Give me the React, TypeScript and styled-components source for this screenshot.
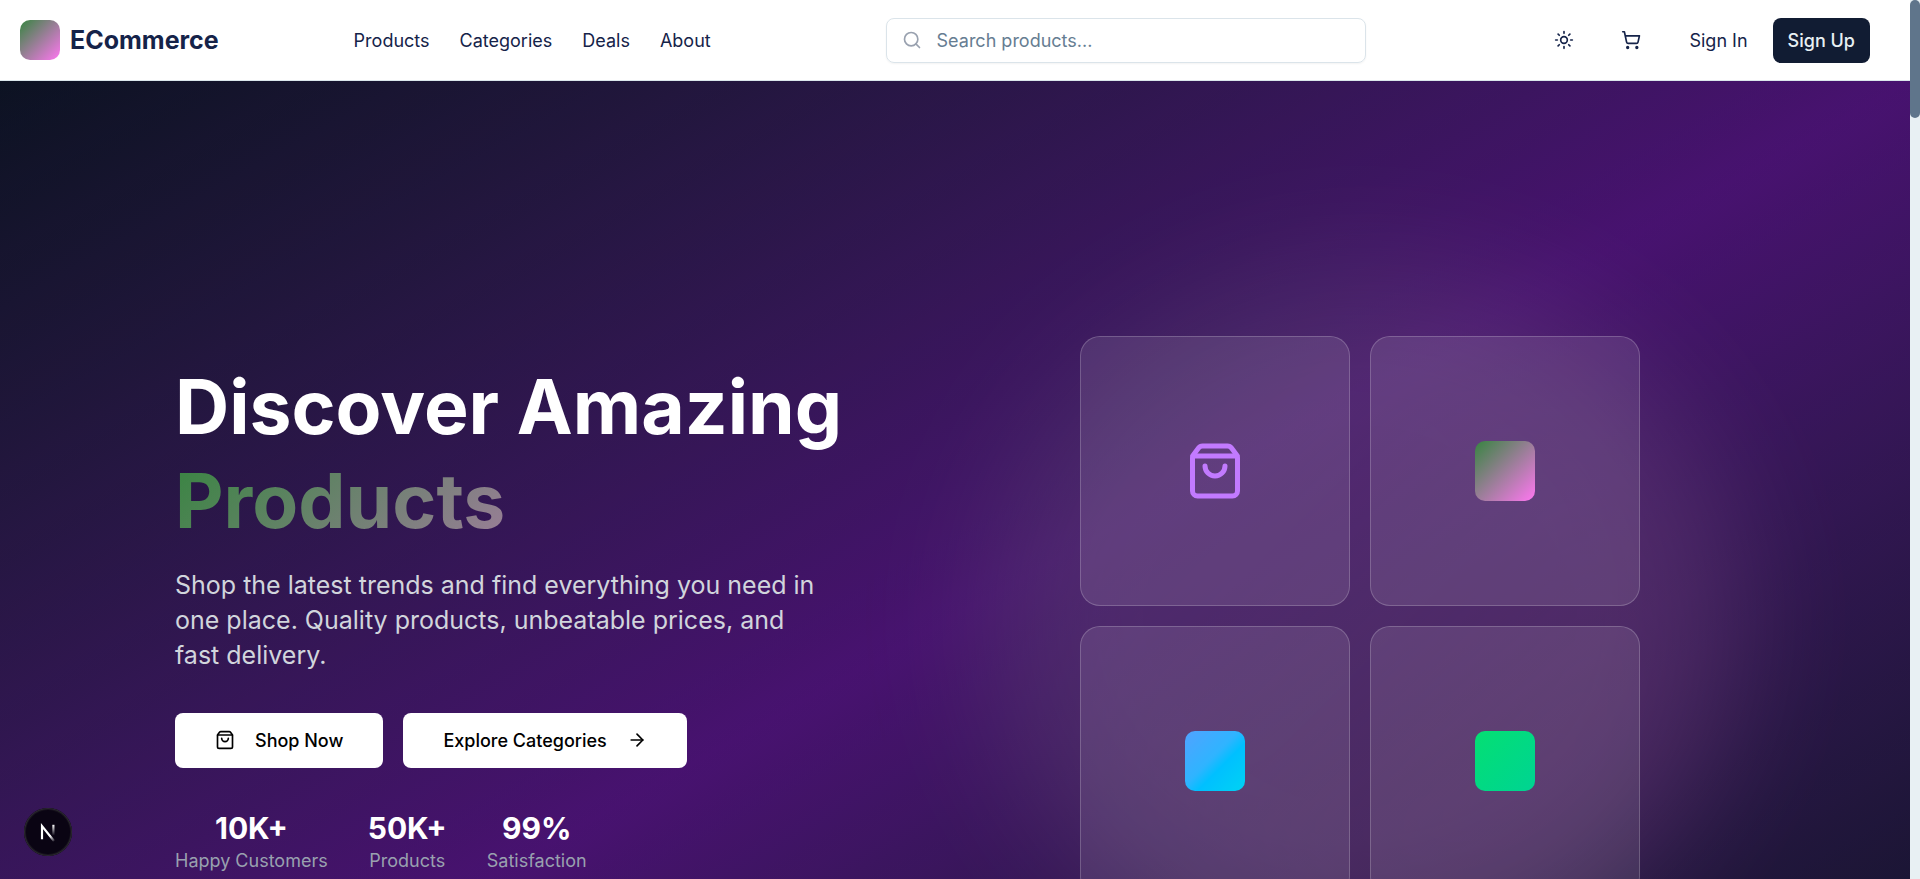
import React from 'react';
import styled, { createGlobalStyle } from 'styled-components';
import { ArrowRight, Search, ShoppingBag, ShoppingCart, Sun } from 'lucide-react';

const GlobalStyle = createGlobalStyle`
  *, *::before, *::after { box-sizing: border-box; }
  body { margin: 0; font-family: Inter, "Liberation Sans", sans-serif; color: #152349; background: #fff; }
  h1, p, dl, dd, dt { margin: 0; }
  a { color: inherit; text-decoration: none; }
  button, input { font: inherit; }
`;

const Shell = styled.div`
  display: flex;
  height: 100vh;
  overflow: hidden;
`;

const Page = styled.div`
  flex: 1;
  min-width: 0;
`;

const ScrollRail = styled.div`
  flex: 0 0 10px;
  background: #e8f0f3;
`;

const ScrollThumb = styled.div`
  height: 118px;
  border-radius: 5px;
  background: #5f758b;
`;

const Header = styled.header`
  display: flex;
  align-items: center;
  justify-content: space-between;
  height: 81px;
  padding: 0 40px 0 20px;
  border-bottom: 1px solid #dbe7ec;
  background: #fff;
`;

const Brand = styled.a`
  display: flex;
  align-items: center;
  gap: 10px;
  font-size: 25px;
  line-height: 35px;
  font-weight: 700;
`;

const GradientTile = styled.span<{ $size: number; $fill: string }>`
  width: ${p => p.$size}px;
  height: ${p => p.$size}px;
  border-radius: 10px;
  background: ${p => p.$fill};
`;

const Nav = styled.nav`
  display: flex;
  gap: 30px;
  font-size: 18px;
  line-height: 25px;
  font-weight: 400;
`;

const SearchBox = styled.label`
  display: flex;
  align-items: center;
  gap: 15px;
  width: 480px;
  height: 45px;
  margin: 0 40px;
  padding: 0 15px;
  border: 1px solid #dbe4ea;
  border-radius: 8px;
  box-shadow: 0 1px 2px rgba(0, 0, 0, 0.05);
  color: #99a1af;
`;

const SearchInput = styled.input`
  flex: 1;
  min-width: 0;
  padding: 0;
  border: 0;
  outline: 0;
  background: transparent;
  color: #152349;
  font-size: 18px;
  line-height: 25px;
  &::placeholder { color: #667d92; opacity: 1; }
`;

const Actions = styled.div`
  display: flex;
  align-items: center;
  gap: 20px;
`;

const AuthLinks = styled.div`
  display: flex;
  gap: 10px;
`;

const IconButton = styled.button`
  display: grid;
  place-items: center;
  width: 47px;
  height: 45px;
  padding: 0;
  border: 0;
  background: transparent;
  color: #152349;
`;

const AuthLink = styled.a<{ $solid?: boolean }>`
  display: flex;
  align-items: center;
  height: 45px;
  padding: 0 15px;
  border-radius: 8px;
  font-size: 18px;
  font-weight: ${p => (p.$solid ? 500 : 400)};
  background: ${p => (p.$solid ? '#111c33' : 'transparent')};
  color: ${p => (p.$solid ? '#e8f0f3' : '#152349')};
`;

const Hero = styled.section`
  padding: 255px 20px;
  background:
    linear-gradient(rgba(0, 0, 0, 0.2), rgba(0, 0, 0, 0.2)),
    linear-gradient(to bottom right in oklab, #0f172b, #59168b, #0f172b);
`;

const HeroGrid = styled.div`
  display: grid;
  grid-template-columns: 1fr 1fr;
  align-items: center;
  gap: 60px;
  max-width: 1560px;
  margin: 0 auto;
`;

const Copy = styled.div`
  display: flex;
  flex-direction: column;
  gap: 40px;
`;

const Intro = styled.div`
  display: flex;
  flex-direction: column;
  gap: 20px;
`;

const Title = styled.h1`
  font-size: 75px;
  line-height: 94px;
  font-weight: 700;
  color: #fff;
`;

const TitleAccent = styled.span`
  display: block;
  background: linear-gradient(135deg, #378540, #ff77f1);
  background-clip: text;
  color: transparent;
`;

const Lead = styled.p`
  max-width: 640px;
  font-size: 25px;
  line-height: 35px;
  color: #d1d5dc;
`;

const ButtonRow = styled.div`
  display: flex;
  gap: 20px;
`;

const HeroButton = styled.button`
  display: flex;
  align-items: center;
  gap: 20px;
  height: 55px;
  padding: 0 40px;
  border: 0;
  border-radius: 8px;
  background: #fff;
  color: #000;
  font-size: 18px;
  font-weight: 500;
`;

const Stats = styled.dl`
  display: flex;
  gap: 40px;
`;

const Stat = styled.div`
  display: flex;
  flex-direction: column-reverse;
  text-align: center;
`;

const StatValue = styled.dd`
  font-size: 30px;
  line-height: 40px;
  font-weight: 700;
  color: #fff;
`;

const StatLabel = styled.dt`
  font-size: 18px;
  line-height: 25px;
  color: #99a1af;
`;

const Showcase = styled.div`
  position: relative;
  display: flex;
  justify-content: center;
`;

const Glow = styled.div`
  position: absolute;
  inset: -70px 0;
  border-radius: 50%;
  background: linear-gradient(135deg, #378540, #ff77f1);
  opacity: 0.2;
  filter: blur(64px);
`;

const CardGrid = styled.div`
  position: relative;
  display: grid;
  grid-template-columns: 1fr 1fr;
  gap: 20px;
  width: 100%;
  max-width: 560px;
`;

const Card = styled.div`
  display: grid;
  place-items: center;
  aspect-ratio: 1;
  border: 1px solid rgba(255, 255, 255, 0.2);
  border-radius: 20px;
  background: rgba(255, 255, 255, 0.1);
  color: #c27aff;
`;

const DevBadge = styled.button`
  position: fixed;
  left: 24px;
  bottom: 23px;
  display: grid;
  place-items: center;
  width: 48px;
  height: 48px;
  padding: 0;
  border: 0;
  border-radius: 50%;
  background: #0a0413;
  box-shadow: inset 0 0 0 1px #2b2830, inset 0 0 0 2px #17131d;
`;

const brandFill = 'linear-gradient(135deg, #378540, #ff77f1)';
const tiles = [
  brandFill,
  'linear-gradient(to bottom right, #51a2ff, #2fb4ff 45%, #00c0ff 60%, #00d3f3)',
  'linear-gradient(to bottom right in oklab, #05df72, #00d492)',
];
const navItems = ['Products', 'Categories', 'Deals', 'About'];
const stats = [
  ['10K+', 'Happy Customers'],
  ['50K+', 'Products'],
  ['99%', 'Satisfaction'],
];

export default function App() {
  return (
    <Shell>
      <GlobalStyle />
      <Page>
        <Header>
          <Brand href="#"><GradientTile $size={40} $fill={brandFill} />ECommerce</Brand>
          <Nav>{navItems.map(n => <a href="#" key={n}>{n}</a>)}</Nav>
          <SearchBox>
            <Search size={20} />
            <SearchInput type="search" aria-label="Search products" placeholder="Search products..." />
          </SearchBox>
          <Actions>
            <IconButton aria-label="Toggle theme"><Sun size={20} /></IconButton>
            <IconButton aria-label="Cart"><ShoppingCart size={20} /></IconButton>
            <AuthLinks>
              <AuthLink href="#">Sign In</AuthLink>
              <AuthLink href="#" $solid>Sign Up</AuthLink>
            </AuthLinks>
          </Actions>
        </Header>
        <Hero>
          <HeroGrid>
            <Copy>
              <Intro>
                <Title>Discover Amazing<TitleAccent>Products</TitleAccent></Title>
                <Lead>
                  Shop the latest trends and find everything you need in one place. Quality products,
                  unbeatable prices, and fast delivery.
                </Lead>
              </Intro>
              <ButtonRow>
                <HeroButton><ShoppingBag size={20} />Shop Now</HeroButton>
                <HeroButton>Explore Categories<ArrowRight size={20} /></HeroButton>
              </ButtonRow>
              <Stats>
                {stats.map(([value, label]) => (
                  <Stat key={label}><StatLabel>{label}</StatLabel><StatValue>{value}</StatValue></Stat>
                ))}
              </Stats>
            </Copy>
            <Showcase>
              <Glow />
              <CardGrid>
                <Card><ShoppingBag size={60} /></Card>
                {tiles.map(fill => <Card key={fill}><GradientTile $size={60} $fill={fill} /></Card>)}
              </CardGrid>
            </Showcase>
          </HeroGrid>
        </Hero>
      </Page>
      <ScrollRail><ScrollThumb /></ScrollRail>
      <DevBadge aria-label="Open developer tools">
        <svg width="24" height="24" viewBox="0 0 20 20" fill="none">
          <defs>
            <linearGradient id="leg" x1="12" y1="13" x2="16" y2="18" gradientUnits="userSpaceOnUse">
              <stop stopColor="#fff" /><stop offset="1" stopColor="#fff" stopOpacity="0" />
            </linearGradient>
            <linearGradient id="post" x1="0" y1="4" x2="0" y2="13" gradientUnits="userSpaceOnUse">
              <stop stopColor="#fff" /><stop offset="1" stopColor="#fff" stopOpacity="0" />
            </linearGradient>
          </defs>
          <path d="M5 16V5L15 17.500" stroke="url(#leg)" strokeWidth="1.800" />
          <path d="M14.500 4v9" stroke="url(#post)" strokeWidth="1.800" />
        </svg>
      </DevBadge>
    </Shell>
  );
}
